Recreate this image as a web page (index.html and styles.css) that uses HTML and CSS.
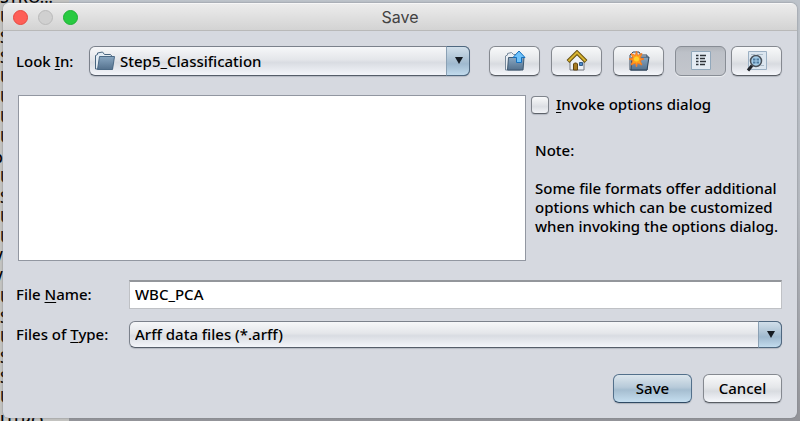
FILE: index.html
```html
<!DOCTYPE html>
<html lang="en">
<head>
<meta charset="utf-8">
<title>Save</title>
<link rel="stylesheet" href="styles.css">
</head>
<body>
<ul class="backdrop" aria-hidden="true">
  <li>STRO...</li><li>U</li><li>S</li><li>S</li><li>U</li><li>U</li><li>U</li><li>U</li><li class="tucked">p</li><li>U</li><li>S</li><li>U</li><li>U</li><li class="tucked">V</li><li class="tucked">V</li><li>U</li><li>S</li><li>U</li><li>S</li><li>S</li><li>U</li><li>UTRO</li>
</ul>
<main class="dialog">
  <header class="titlebar">
    <div class="lights">
      <button class="light close" aria-label="Close"></button>
      <button class="light minimize" aria-label="Minimize" disabled></button>
      <button class="light expand" aria-label="Zoom"></button>
    </div>
    <h1 class="title">Save</h1>
  </header>
  <form class="content">
    <div class="look-row">
      <label for="look">Look <u>I</u>n:</label>
      <div class="combo combo-look">
        <select id="look"><option>Step5_Classification</option></select>
        <svg class="folder" width="22" height="20" viewBox="0 0 22 20">
          <defs><linearGradient id="blue" x1="0" y1="0" x2="0" y2="1"><stop offset="0" stop-color="#89a7c2"/><stop offset="1" stop-color="#54718d"/></linearGradient></defs>
          <path d="M1.500 18V4.500L3.500 3.500V2l5-1 2 2.500h6l2 2.500v12z" fill="#e3ecf4" stroke="#48657f"/>
          <path d="M5.500 5.500h15l-2 13H3.500z" fill="url(#blue)" stroke="#4c6a86"/>
        </svg>
        <svg class="arrow" width="8" height="7" viewBox="0 0 8 7"><path d="M0 0h8L4 7z" fill="#151b22"/></svg>
      </div>
      <div class="tools">
        <button type="button" class="btn tool" aria-label="Up one level">
          <svg width="22" height="22" viewBox="0 0 22 22">
            <path d="M1.500 20V6l2-1V3.500l4-1 2 2h5l2 3V20z" fill="#e9eef3" stroke="#76889a"/>
            <path d="M4.500 7.500h15.500l-1 12.500H3.500z" fill="url(#blue)" stroke="#405970"/>
            <path d="M15 1l6 6.500h-3.500v5h-5v-5H9z" fill="#6fc2fa" stroke="#1670bd"/>
          </svg>
        </button>
        <button type="button" class="btn tool" aria-label="Home">
          <svg width="22" height="22" viewBox="0 0 22 22">
            <path d="M4 10l7-7 7 7v10H4z" fill="#eef1f5" stroke="#747980"/>
            <path d="M2 11.500l9-9 9 9" fill="none" stroke="#67500e" stroke-width="4"/>
            <path d="M2.500 11L11 2.500l8.500 8.500" fill="none" stroke="#d8b431" stroke-width="2"/>
            <path d="M7.500 20v-6l1-1h2l1 1v6z" fill="#a57a22" stroke="#62460e"/>
            <path d="M13.500 12.500h3v3h-3z" fill="#4d8ac9" stroke="#315c89"/>
          </svg>
        </button>
        <button type="button" class="btn tool" aria-label="New folder">
          <svg width="22" height="22" viewBox="0 0 22 22">
            <path d="M2 20V5l3-3h6l2 3h6v15z" fill="#d9e2eb" stroke="#34475a"/>
            <path d="M4 7h17l-2 13H3z" fill="url(#blue)" stroke="#2c455d"/>
            <path d="M8.500 1l1 4.500 4.500-2-2 4.500 4 1-4 1.500 2 4.500-4.500-2-1 4-1-4-4.500 2 2-4.500-4-1.500 4-1-2-4.500 4.500 2z" fill="#ffa21a" stroke="#f57a25"/>
            <circle cx="8.500" cy="9" r="2.500" fill="#ffd22e"/>
          </svg>
        </button>
        <button type="button" class="btn tool pressed" aria-label="List view" aria-pressed="true">
          <svg width="22" height="22" viewBox="0 0 22 22">
            <path d="M1.500 1.500h19v18h-19z" fill="#e4ebf3" stroke="#92a8bb"/>
            <path d="M6 5.500h2.500M6 8.500h2.500M6 11.500h2.500M6 14.500h2.500M10 5.500h6M10 8.500h5M10 11.500h6M10 14.500h5" stroke="#2f343a" stroke-width="1.500"/>
          </svg>
        </button>
        <button type="button" class="btn tool last" aria-label="Details view">
          <svg width="22" height="22" viewBox="0 0 22 22">
            <path d="M2.500 1.500h18v18h-18z" fill="#dce6ef" stroke="#9bb0c3"/>
            <path d="M5 4.500h4M11 4.500h6M15 15.500h3" stroke="#a9bac8"/>
            <path d="M6 15.500l-4 5" stroke="#202329" stroke-width="3"/>
            <circle cx="10" cy="11" r="5.500" fill="#a5cde8" stroke="#4b525a" stroke-width="1.500"/>
            <path d="M7 9.500h2.500M10.500 9.500H13M7 12.500h2.500M10.500 12.500H13" stroke="#4f7b9f" stroke-width="2"/>
          </svg>
        </button>
      </div>
    </div>
    <div class="middle">
      <div class="files" role="listbox" aria-label="Files"></div>
      <aside class="side">
        <label class="check" for="invoke"><input type="checkbox" id="invoke"><span><u>I</u>nvoke options dialog</span></label>
        <div class="note">
          <p>Note:</p>
          <p>Some file formats offer additional<br>options which can be customized<br>when invoking the options dialog.</p>
        </div>
      </aside>
    </div>
    <div class="fields">
      <label for="name">File <u>N</u>ame:</label>
      <input class="name" id="name" type="text" value="WBC_PCA">
      <label for="type">Files of <u>T</u>ype:</label>
      <div class="combo">
        <select id="type"><option>Arff data files (*.arff)</option></select>
        <svg class="arrow" width="8" height="7" viewBox="0 0 8 7"><path d="M0 0h8L4 7z" fill="#151b22"/></svg>
      </div>
    </div>
    <div class="actions">
      <button type="button" class="btn primary">Save</button>
      <button type="button" class="btn">Cancel</button>
    </div>
  </form>
</main>
</body>
</html>
```
FILE: styles.css
```css
* { box-sizing: border-box; }

body {
  margin: 0;
  padding: 3px;
  min-height: 100vh;
  overflow: hidden;
  position: relative;
  background: linear-gradient(#bdc3ca, #b5b9bf 50%, #939499);
  font: 500 15px/19px "Noto Sans", "Open Sans", sans-serif;
  color: #000;
}

.backdrop {
  position: absolute;
  top: -13px;
  left: 0;
  width: 69px;
  margin: 0;
  padding: 0;
  list-style: none;
  background: #c3c3c0;
  font-size: 16px;
  line-height: 20px;
}

.backdrop .tucked { text-indent: -7px; }
.backdrop li:last-child { padding-top: 4px; }

.dialog {
  position: relative;
  min-height: calc(100vh - 6px);
  border-radius: 6px;
  background: #d6d9e0;
  box-shadow: 0 0 2px #777b80;
  overflow: hidden;
}

.titlebar {
  position: relative;
  display: flex;
  align-items: center;
  justify-content: center;
  height: 28px;
  background: linear-gradient(#ececec, #d3d3d3);
  border-top: 1px solid #f7f7f7;
  border-bottom: 1px solid #b9b9b9;
}

.lights {
  position: absolute;
  left: 10px;
  display: flex;
  gap: 10px;
}

.light {
  width: 15px;
  height: 15px;
  padding: 0;
  border: 1px solid #e7483f;
  border-radius: 50%;
  background: #fe5f57;
}

.minimize { background: #d0d0d0; border-color: #bababa; }
.expand { background: #28ca41; border-color: #1db134; }

.title {
  margin: 0;
  font: 16px/20px Inter, sans-serif;
  color: #424242;
}

.content { padding: 15px 15px 14px 13px; }

u { text-underline-offset: 2px; text-decoration-skip-ink: none; }

.look-row {
  display: flex;
  align-items: center;
}

.look-row > label { width: 73px; }

.combo {
  position: relative;
  flex: 1;
}

select {
  display: block;
  appearance: none;
  width: 100%;
  height: 27px;
  padding: 0 28px 0 5px;
  border: 1px solid #7b818b;
  border-bottom-color: #555d69;
  border-radius: 6px;
  background: linear-gradient(#f6f7f9, #e4e6ea 45%, #d9dce2 55%, #f3f5fa);
  box-shadow: 0 1px 1px #b4b9c2;
  font: inherit;
  color: inherit;
}

.combo::after {
  content: "";
  position: absolute;
  inset: 0 0 0 auto;
  width: 22px;
  border: 1px solid #4f6880;
  border-left-color: #8aa0b4;
  border-radius: 0 6px 6px 0;
  background: linear-gradient(#d1dfea, #a8bfd2 50%, #9fb9cf 60%, #c2dbed);
  pointer-events: none;
}

.arrow {
  position: absolute;
  z-index: 1;
  top: calc(50% - 4px);
  right: 7px;
  pointer-events: none;
}

.combo-look select { height: 30px; padding-left: 30px; }

.folder {
  position: absolute;
  top: 5px;
  left: 5px;
  pointer-events: none;
}

.tools {
  display: flex;
  gap: 11px;
  margin-left: 19px;
}

.btn {
  width: 79px;
  height: 29px;
  padding: 0;
  border: 1px solid #858990;
  border-bottom-color: #595d64;
  border-radius: 6px;
  background: linear-gradient(#f8f9fa, #e5e7ea 45%, #d8dbe0 60%, #f5f7fb);
  box-shadow: 0 1px 1px #b0b4bc;
  font: inherit;
  color: inherit;
}

.tool {
  display: grid;
  place-items: center;
  width: 51px;
  height: 30px;
}

.pressed {
  border-color: #888d95;
  background: linear-gradient(#b1b5bb, #bdc1c8 20%, #c3c6cc);
  box-shadow: 0 1px 1px #eceef1;
}

.last { margin-left: -6px; }

.primary {
  border-color: #53708b;
  border-bottom-color: #2f4a64;
  background: linear-gradient(#dce6ed, #b7cad9 45%, #a5bdd0 55%, #c5deef);
}

.middle {
  display: flex;
  gap: 5px;
  margin-top: 19px;
  padding-left: 2px;
}

.files {
  flex: 1;
  height: 166px;
  border: 1px solid #9297a1;
  background: #fff;
}

.side { width: 251px; }

.check {
  display: flex;
  align-items: center;
  gap: 7px;
}

.check input {
  appearance: none;
  width: 18px;
  height: 18px;
  margin: 0;
  border: 1px solid #7f848c;
  border-bottom-color: #5d626a;
  border-radius: 4px;
  background: linear-gradient(#f9fafb, #dcdfe4 60%, #f2f4f8);
  box-shadow: 0 1px 1px #b4b9c2;
}

.note { padding: 27px 0 0 4px; }
.note p { margin: 0 0 19px; white-space: nowrap; }

.fields {
  display: grid;
  grid-template-columns: 113px 1fr;
  align-items: center;
  row-gap: 12px;
  margin-top: 19px;
}

.name {
  width: 100%;
  height: 29px;
  padding: 0 5px 2px;
  border: 1px solid #bfc1c5;
  border-top: 2px solid #93969b;
  background: #fff;
  font: inherit;
  color: inherit;
}

.actions {
  display: flex;
  justify-content: flex-end;
  gap: 11px;
  margin-top: 26px;
}
```
